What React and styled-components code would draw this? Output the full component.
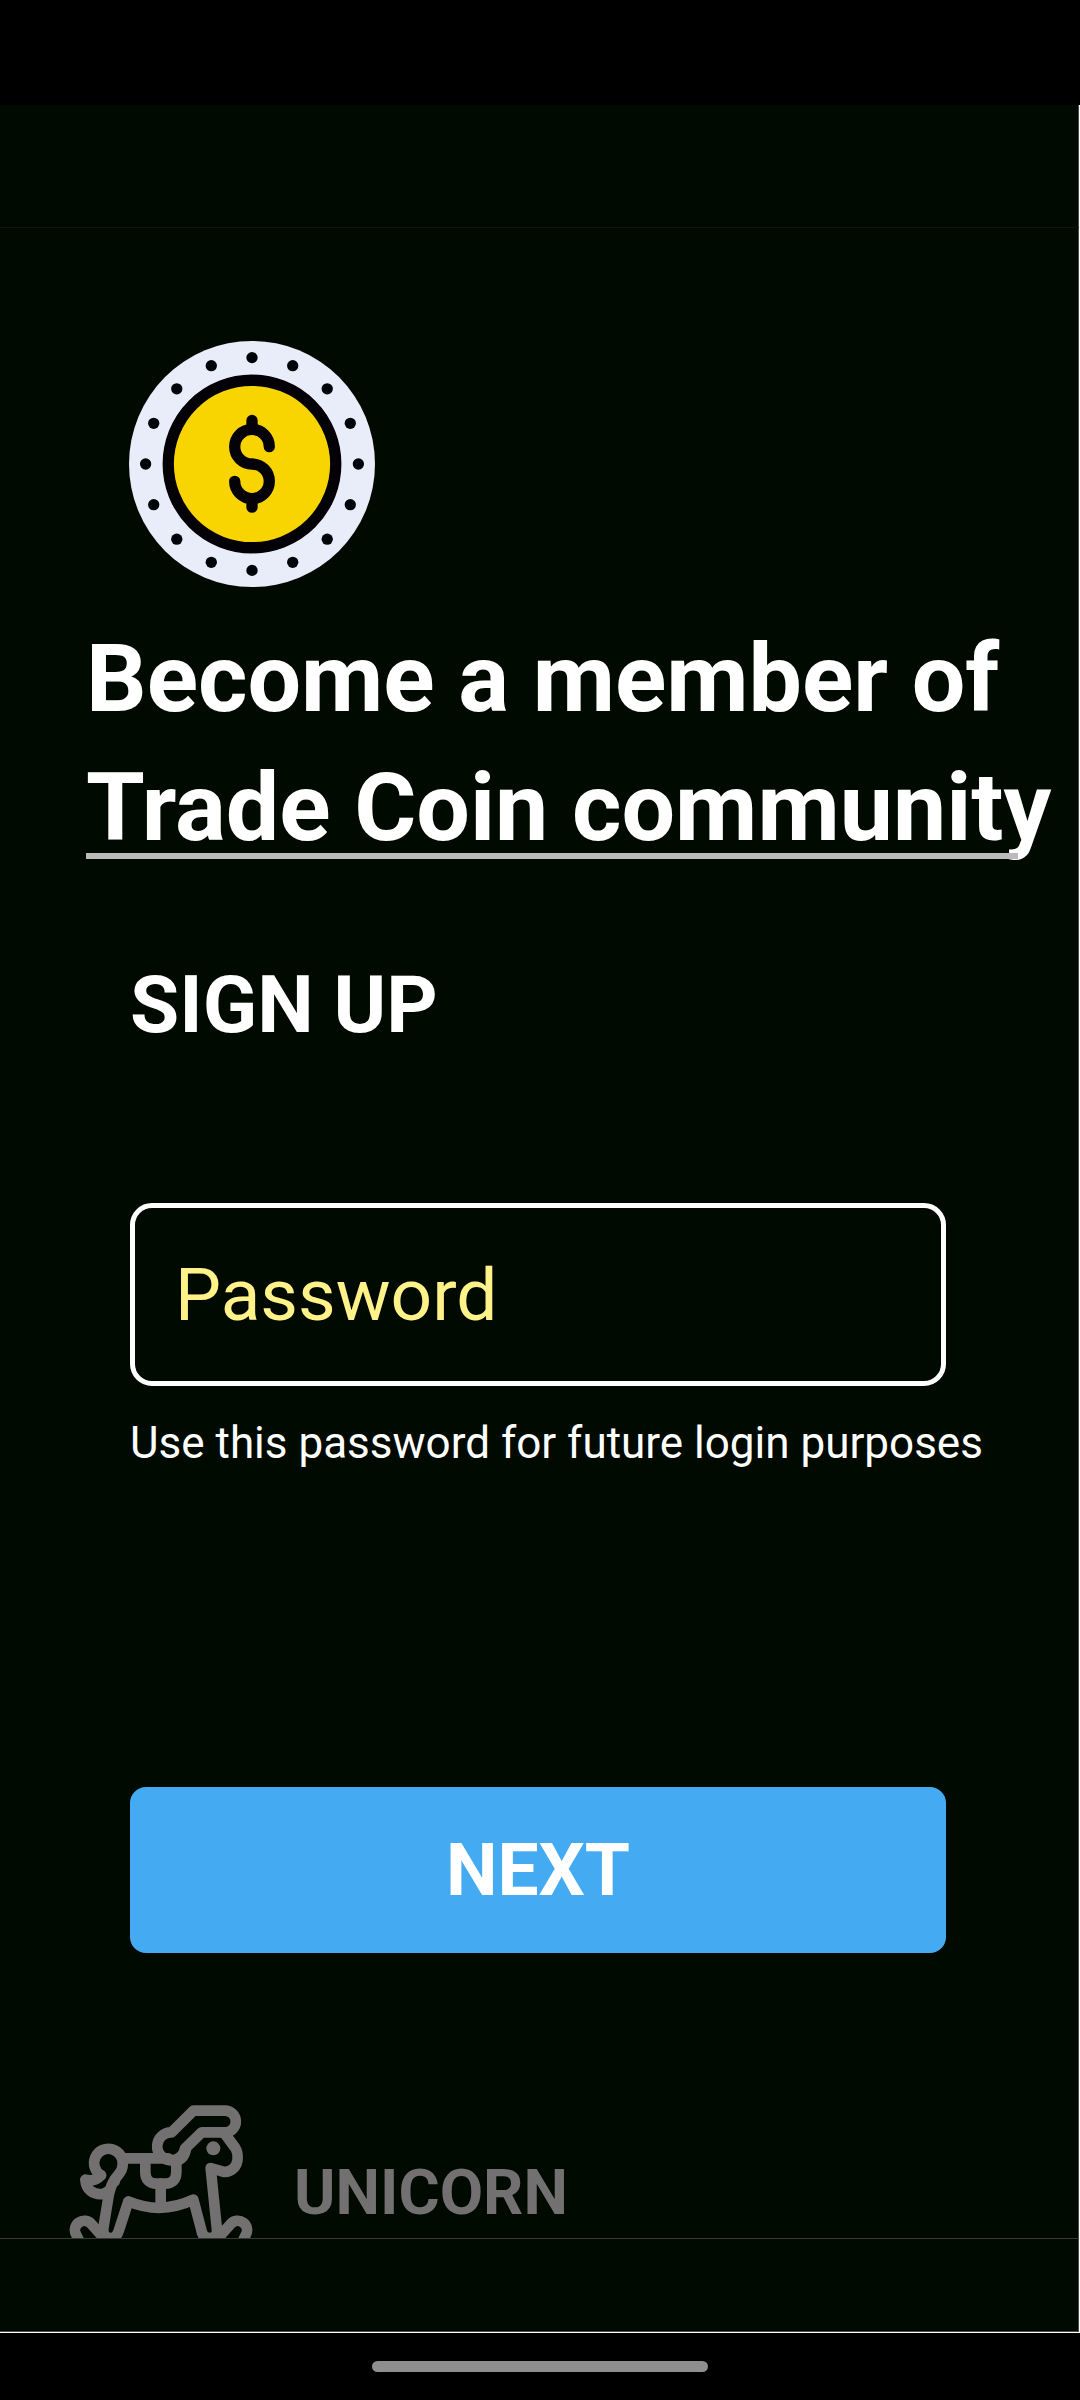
import React from "react";
import styled, { createGlobalStyle } from "styled-components";

const GlobalStyle = createGlobalStyle`
  *, *::before, *::after { box-sizing: border-box; }
  body {
    margin: 0;
    background: #000;
    color: #fff;
    font-family: Roboto, "Liberation Sans", sans-serif;
    overflow-x: hidden;
  }
`;

const Page = styled.div`
  display: flex;
  flex-direction: column;
  min-height: 100vh;
`;

const StatusBar = styled.div`
  height: 105px;
`;

const Screen = styled.div`
  flex: 1;
  display: flex;
  flex-direction: column;
  background: #010a00;
  border: solid #fff;
  border-width: 0 1px 1px 0;
  box-shadow: inset -1px -1px #4c504c;
`;

const TopBar = styled.header`
  height: 123px;
  border-bottom: 1px solid #0d160d;
`;

const BottomBar = styled.footer`
  height: 94px;
  border-top: 1px solid #343a34;
`;

const Content = styled.main`
  flex: 1;
  padding-top: 113px;
`;

const LogoRow = styled.div`
  padding-left: 129px;
`;

const Form = styled.form`
  padding: 0 133px 0 130px;
`;

const Coin = styled.svg`
  display: block;
  width: 246px;
  height: 246px;
`;

const Intro = styled.div`
  margin: 27px 61px 0 86px;
`;

const Title = styled.h1`
  margin: 0;
  font-size: 95px;
  line-height: 129px;
  font-weight: 700;
  white-space: nowrap;
`;

const Rule = styled.hr`
  position: relative;
  height: 6px;
  margin: -19px 0 0;
  border: 0;
  background: #bbb;
`;

const Subtitle = styled.h2`
  margin: 99px 0 0;
  font-size: 80px;
  line-height: 94px;
  font-weight: 700;
`;

const PasswordInput = styled.input`
  display: block;
  width: 100%;
  height: 183px;
  margin-top: 151px;
  padding: 0 40px;
  border: 5px solid #fff;
  border-radius: 22px;
  background: transparent;
  color: #fff288;
  font: 400 73px Roboto, "Liberation Sans", sans-serif;
  outline: none;

  &::placeholder { color: #fff288; opacity: 1; }
`;

const Hint = styled.label`
  display: block;
  margin-top: 31px;
  font-size: 44px;
  line-height: 52px;
  white-space: nowrap;
`;

const NextButton = styled.button`
  display: block;
  width: 100%;
  height: 166px;
  margin-top: 318px;
  padding: 0;
  border: 0;
  border-radius: 16px;
  background: #44abf2;
  color: #fff;
  font: 700 73px Roboto, "Liberation Sans", sans-serif;
  cursor: pointer;
`;

const Brand = styled.div`
  display: flex;
  align-items: flex-end;
  gap: 40px;
  margin-top: 150px;
  padding-left: 68px;
  color: #737071;
`;

const Horse = styled.svg`
  width: 186px;
  height: 135px;
  flex: none;
`;

const BrandName = styled.span`
  font-size: 63px;
  line-height: 90px;
  font-weight: 700;
`;

const NavBar = styled.nav`
  display: flex;
  align-items: center;
  justify-content: center;
  height: 67px;
`;

const HomeHandle = styled.div`
  width: 336px;
  height: 11px;
  border-radius: 6px;
  background: #8e8e8e;
`;

function CoinLogo() {
  const dots = Array.from({ length: 16 }, (_, i) => (i * Math.PI) / 8);
  return (
    <Coin viewBox="-370 -370 740 740" aria-hidden="true">
      <circle r="370" fill="#e9edf9" />
      {dots.map((a) => (
        <circle key={a} cx={320 * Math.cos(a)} cy={320 * Math.sin(a)} r="17" fill="#000308" />
      ))}
      <circle r="252" fill="#f8d400" stroke="#030006" strokeWidth="34" />
      <g fill="none" stroke="#050307" strokeWidth="34" strokeLinecap="round">
        <path d="M52 -52A52 52 0 1 0 0 0A52 52 0 1 1 -52 52" />
        <path d="M0 -131V-106M0 130V106" />
      </g>
    </Coin>
  );
}

function HorseLogo() {
  return (
    <Horse viewBox="54 69 558 405" aria-hidden="true">
      <g fill="none" stroke="currentColor" strokeWidth="32" strokeLinecap="round" strokeLinejoin="round">
        <path d="M365 157L430 92H525A32.5 32.5 0 0 1 525 157H455L405 206A42 42 0 1 1 365 157Z" />
        <path d="M408 206C405 225 395 240 375 243" />
        <path d="M525 162L556 204Q563 215 563 233C563 262 540 279 519 275L482 264L501 450Q501 474 478 474Q458 474 454 450L430 359Q333 405 235 364L207 450Q200 474 183 474Q158 474 160 445L175 352Q180 320 195 297" />
        <path d="M153 286A43 43 0 1 1 218 255C218 280 197 285 194 304" />
        <path d="M153 286Q136 306 106 299C108 328 128 346 160 342L178 332" />
        <path d="M225 235H355" />
        <path d="M286 240V275Q286 311 320 311H345Q379 311 379 275V245" />
        <path d="M332 311V380" />
        <path d="M86 480L79 465A28 28 0 0 1 124 432L165 478" />
        <path d="M580 480L587 465A28 28 0 0 0 542 432L501 478" />
      </g>
      <circle cx="490" cy="205" r="21" fill="currentColor" />
    </Horse>
  );
}

export default function App() {
  return (
    <>
      <GlobalStyle />
      <Page>
        <StatusBar />
        <Screen>
          <TopBar />
          <Content>
            <LogoRow>
              <CoinLogo />
            </LogoRow>
            <Intro>
              <Title>
                Become a member of
                <br />
                Trade Coin community
              </Title>
              <Rule />
            </Intro>
            <Form onSubmit={(e) => e.preventDefault()}>
              <Subtitle>SIGN UP</Subtitle>
              <PasswordInput id="password" type="password" placeholder="Password" autoComplete="new-password" />
              <Hint htmlFor="password">Use this password for future login purposes</Hint>
              <NextButton type="submit">NEXT</NextButton>
            </Form>
            <Brand>
              <HorseLogo />
              <BrandName>UNICORN</BrandName>
            </Brand>
          </Content>
          <BottomBar />
        </Screen>
        <NavBar>
          <HomeHandle />
        </NavBar>
      </Page>
    </>
  );
}
